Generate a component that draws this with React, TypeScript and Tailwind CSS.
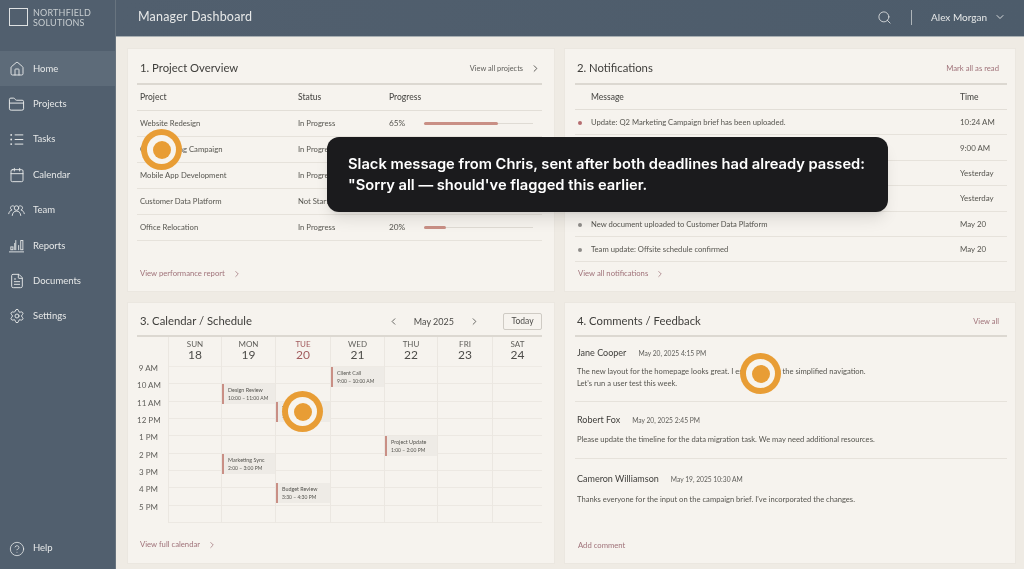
import { Home, FolderClosed, Calendar, FileText, Settings, CircleHelp, Search, ChevronDown, ChevronRight, ChevronLeft } from 'lucide-react';
import type { ReactNode } from 'react';

const TasksIcon = () => (
  <svg width="17" height="17" viewBox="0 0 24 24" fill="none" stroke="currentColor" strokeWidth="1.4" strokeLinecap="round">
    <circle cx="4.500" cy="5.500" r="1.300" fill="currentColor" stroke="none" />
    <circle cx="4.500" cy="12" r="1.300" fill="currentColor" stroke="none" />
    <circle cx="4.500" cy="18.500" r="1.300" fill="currentColor" stroke="none" />
    <path d="M10 5.500h11M10 12h11M10 18.500h11" />
  </svg>
);

const TeamIcon = () => (
  <svg width="17" height="17" viewBox="0 0 24 24" fill="none" stroke="currentColor" strokeWidth="1.3" strokeLinecap="round" strokeLinejoin="round">
    <circle cx="12" cy="8.500" r="3.200" />
    <path d="M6 19c.4-4 2.800-6.200 6-6.200s5.600 2.200 6 6.200" />
    <path d="M8.700 6.200A3 3 0 1 0 5.800 11.200C3.200 11.800 1.600 13.800 1 16.500" />
    <path d="M15.300 6.200A3 3 0 1 1 18.200 11.200C20.800 11.800 22.400 13.800 23 16.500" />
  </svg>
);

const ReportsIcon = () => (
  <svg width="17" height="17" viewBox="0 0 24 24" fill="none" stroke="currentColor" strokeWidth="1.300" strokeLinecap="round">
    <path d="M2 21h20" />
    <rect x="4" y="14" width="3" height="4" />
    <path d="M11 5v13" />
    <path d="M9.500 9v9M15 12v6" />
    <rect x="18" y="5" width="3" height="13" />
  </svg>
);

const NAV: { label: string; icon: ReactNode; active?: boolean }[] = [
  { label: 'Home', icon: <Home size={16} strokeWidth={1.4} />, active: true },
  { label: 'Projects', icon: <FolderClosed size={17} strokeWidth={1.4} /> },
  { label: 'Tasks', icon: <TasksIcon /> },
  { label: 'Calendar', icon: <Calendar size={16} strokeWidth={1.4} /> },
  { label: 'Team', icon: <TeamIcon /> },
  { label: 'Reports', icon: <ReportsIcon /> },
  { label: 'Documents', icon: <FileText size={16} strokeWidth={1.4} /> },
  { label: 'Settings', icon: <Settings size={16} strokeWidth={1.4} /> },
];

const PROJECTS = [
  { name: 'Website Redesign', status: 'In Progress', pct: '65%', fill: 'w-[68%]' },
  { name: 'Q2 Marketing Campaign', status: 'In Progress', pct: '40%', fill: 'w-[40%]' },
  { name: 'Mobile App Development', status: 'In Progress', pct: '30%', fill: 'w-[30%]' },
  { name: 'Customer Data Platform', status: 'Not Started', pct: '0%', fill: 'w-0' },
  { name: 'Office Relocation', status: 'In Progress', pct: '20%', fill: 'w-[20%]' },
];

const NOTIFICATIONS = [
  { text: 'Update: Q2 Marketing Campaign brief has been uploaded.', time: '10:24 AM', dot: 'bg-[#b56d70]' },
  { text: 'Reminder: Website Redesign review is due today.', time: '9:00 AM', dot: 'bg-[#b56d70]' },
  { text: 'Mobile App Development milestone completed.', time: 'Yesterday', dot: 'bg-[#8f8d89]' },
  { text: 'Budget Review meeting was rescheduled.', time: 'Yesterday', dot: 'bg-[#8f8d89]' },
  { text: 'New document uploaded to Customer Data Platform', time: 'May 20', dot: 'bg-[#8f8d89]' },
  { text: 'Team update: Offsite schedule confirmed', time: 'May 20', dot: 'bg-[#8f8d89]' },
];

const HOURS = ['9 AM', '10 AM', '11 AM', '12 PM', '1 PM', '2 PM', '3 PM', '4 PM', '5 PM'];

const DAYS = [
  { name: 'SUN', num: '18', width: 'w-[53px]', events: [] },
  {
    name: 'MON', num: '19', width: 'w-[54px]',
    events: [
      { title: 'Design Review', time: '10:00 – 11:00 AM', pos: 'top-[17px]' },
      { title: 'Marketing Sync', time: '2:00 – 3:00 PM', pos: 'top-[87px]' },
    ],
  },
  {
    name: 'TUE', num: '20', width: 'w-[55px]', today: true,
    events: [
      { title: 'Team Review', time: '10:00 – 11:00 AM', pos: 'top-[35px]' },
      { title: 'Budget Review', time: '3:30 – 4:30 PM', pos: 'top-[116px]' },
    ],
  },
  { name: 'WED', num: '21', width: 'w-[54px]', events: [{ title: 'Client Call', time: '9:00 – 10:00 AM', pos: 'top-0' }] },
  { name: 'THU', num: '22', width: 'w-[53px]', events: [{ title: 'Project Update', time: '1:00 – 2:00 PM', pos: 'top-[69px]' }] },
  { name: 'FRI', num: '23', width: 'w-[55px]', events: [] },
  { name: 'SAT', num: '24', width: 'w-[50px]', events: [] },
];

const COMMENTS = [
  {
    name: 'Jane Cooper', date: 'May 20, 2025 4:15 PM', box: 'h-[65px] pt-[9px] border-b border-[#e6e2db]', gap: 'mt-[5px]',
    lines: ['The new layout for the homepage looks great. I especially like the simplified navigation.', "Let's run a user test this week."],
  },
  {
    name: 'Robert Fox', date: 'May 20, 2025 2:45 PM', box: 'h-[57px] pt-[11px] border-b border-[#e6e2db]', gap: 'mt-[6px]',
    lines: ['Please update the timeline for the data migration task. We may need additional resources.'],
  },
  {
    name: 'Cameron Williamson', date: 'May 19, 2025 10:30 AM', box: 'h-[60px] pt-[13px]', gap: 'mt-[7px]',
    lines: ["Thanks everyone for the input on the campaign brief. I've incorporated the changes."],
  },
];

function Marker({ pos }: { pos: string }) {
  return (
    <div className={`absolute ${pos} w-[41px] h-[41px] rounded-full bg-[#e89d35] flex items-center justify-center`}>
      <div className="w-[29px] h-[29px] rounded-full bg-[#f7f4ee] flex items-center justify-center">
        <div className="w-[18px] h-[18px] rounded-full bg-[#e89d35]" />
      </div>
    </div>
  );
}

function FooterLink({ label, chevron = true }: { label: string; chevron?: boolean }) {
  return (
    <a className="flex items-center gap-[5px] pl-[3px] text-[7.700px] text-[#a0737a]">
      {label}
      {chevron && <ChevronRight size={10} strokeWidth={1.8} className="ml-[2px]" />}
    </a>
  );
}

export default function App() {
  return (
    <div className="relative flex h-screen w-full overflow-hidden bg-[#efebe4] text-[#56554f] font-['Lato',sans-serif] blur-[0.3px]">
      {/* Sidebar */}
      <aside className="w-[116px] shrink-0 bg-[#515f6e] text-[#e6e8e8] flex flex-col border-r border-[#68747f]">
        <div className="h-[51px] pl-[9px] pt-[8px] flex items-start gap-[5px]">
          <div className="w-[19px] h-[18px] border border-[#dfe2e3]" />
          <div className="text-[9px] leading-[10px] text-[#c8ced1] tracking-[0.2px]">
            NORTHFIELD
            <br />
            SOLUTIONS
          </div>
        </div>
        <nav className="flex flex-col">
          {NAV.map((item) => (
            <div
              key={item.label}
              className={`h-[35.400px] flex items-center gap-[8px] pl-[8px] text-[9.500px] ${item.active ? 'bg-[#5d6b79]' : ''}`}
            >
              <span className="w-[17px] flex justify-center">{item.icon}</span>
              {item.label}
            </div>
          ))}
        </nav>
        <div className="mt-auto h-[41px] flex items-center gap-[8px] pl-[8px] text-[9.500px]">
          <span className="w-[17px] flex justify-center">
            <CircleHelp size={16} strokeWidth={1.2} />
          </span>
          Help
        </div>
      </aside>

      <div className="flex-1 flex flex-col min-w-0">
        {/* Top bar */}
        <header className="h-[37px] shrink-0 pb-[2px] bg-gradient-to-r from-[#515f6e] to-[#4d5c6b] border-b border-[#a9b0b3] flex items-center pl-[22px] pr-[18px] text-[#e6e8e8]">
          <h1 className="text-[12.500px] tracking-[0.2px]">Manager Dashboard</h1>
          <div className="ml-auto flex items-center">
            <Search size={15} strokeWidth={1.3} />
            <div className="w-px h-[15px] bg-[#aeb5b9] mx-[19px]" />
            <span className="text-[10px]">Alex Morgan</span>
            <ChevronDown size={12} strokeWidth={1.8} className="ml-[7px]" />
          </div>
        </header>

        {/* Cards */}
        <main className="flex-1 grid grid-cols-[428px_452px] grid-rows-[244px_262px] gap-x-[9px] gap-y-[10px] pl-[11px] pt-[11px]">
          <section className="bg-[#f6f3ee] border border-[#ebe7e0] pl-[9px] pr-[12px] flex flex-col">
            <div className="h-[36px] shrink-0 pt-[5px] flex items-center justify-between pl-[3px] pr-[1px] border-b-2 border-[#dcd8d1]">
              <h2 className="text-[11.300px] text-[#3f3e3b]">1. Project Overview</h2>
              <span className="flex items-center gap-[7px] text-[7.400px] text-[#5f5e5a]">
                View all projects <ChevronRight size={11} strokeWidth={1.8} className="text-[#3f3e3b]" />
              </span>
            </div>
            <div className="h-[26px] flex items-center pl-[3px] border-b border-[#e2ded7] text-[8.500px] font-medium text-[#4d4c49]">
              <span className="w-[158px]">Project</span>
              <span className="w-[91px]">Status</span>
              <span>Progress</span>
            </div>
            {PROJECTS.map((p) => (
              <div key={p.name} className="h-[26px] flex items-center pl-[3px] border-b border-[#e6e2db] text-[7.700px]">
                <span className="w-[158px]">{p.name}</span>
                <span className="w-[91px]">{p.status}</span>
                <span className="w-[35px] text-[8.300px]">{p.pct}</span>
                <div className="w-[109px] h-px bg-[#dfdbd4] flex items-center">
                  <div className={`h-[3px] rounded-full bg-[#c98f85] ${p.fill}`} />
                </div>
              </div>
            ))}
            <div className="mt-auto h-[23px]">
              <FooterLink label="View performance report" />
            </div>
          </section>

          <section className="bg-[#f6f3ee] border border-[#ebe7e0] pl-[10px] pr-[8px] flex flex-col">
            <div className="h-[36px] shrink-0 pt-[5px] flex items-center justify-between pl-[2px] pr-[8px] border-b-2 border-[#dcd8d1]">
              <h2 className="text-[11.300px] text-[#3f3e3b]">2. Notifications</h2>
              <span className="text-[7.700px] text-[#a0737a]">Mark all as read</span>
            </div>
            <div className="h-[25px] flex items-center border-b border-[#e2ded7] text-[8.500px] font-medium text-[#4d4c49]">
              <span className="w-[385px] pl-[16px]">Message</span>
              <span>Time</span>
            </div>
            {NOTIFICATIONS.map((n) => (
              <div key={n.text} className="h-[25.400px] pt-[2px] flex items-center border-b border-[#e6e2db] last:border-b-0 text-[7.900px]">
                <span className={`w-[4px] h-[4px] rounded-full ml-[3px] mr-[9px] shrink-0 ${n.dot}`} />
                <span className="w-[369px] text-[7.650px]">{n.text}</span>
                <span>{n.time}</span>
              </div>
            ))}
            <div className="mt-auto h-[23px]">
              <FooterLink label="View all notifications" />
            </div>
          </section>

          <section className="bg-[#f6f3ee] border border-[#ebe7e0] pl-[9px] pr-[12px] flex flex-col">
            <div className="h-[34px] shrink-0 pt-[5px] flex items-center pl-[3px] border-b-2 border-[#dcd8d1]">
              <h2 className="text-[11.300px] text-[#3f3e3b]">3. Calendar / Schedule</h2>
              <div className="ml-auto flex items-center text-[#4d4c49]">
                <ChevronLeft size={11} strokeWidth={1.8} />
                <span className="mx-[15px] text-[9px]">May 2025</span>
                <ChevronRight size={11} strokeWidth={1.8} />
                <button className="ml-[23px] w-[39px] h-[17px] border border-[#cfcbc4] rounded-[2px] text-[8.500px]">Today</button>
              </div>
            </div>
            <div className="flex">
              {/* Hour labels */}
              <div className="w-[31px] shrink-0 pt-[29px]">
                {HOURS.map((h) => (
                  <div key={h} className="h-[17.330px] pr-[10px] text-right text-[8px] leading-[8px] text-[#5f5e5a] relative top-[-2px] whitespace-nowrap">
                    {h}
                  </div>
                ))}
              </div>
              {DAYS.map((d) => (
                <div key={d.name} className={`${d.width} shrink-0 border-l border-[#ebe7e1]`}>
                  <div className="h-[29px] flex flex-col items-center pt-[3px]">
                    <span className={`text-[8px] leading-[8px] ${d.today ? 'text-[#a25c5e]' : 'text-[#5f5e5a]'}`}>{d.name}</span>
                    <span className={`text-[12px] leading-[13px] ${d.today ? 'text-[#a25c5e]' : 'text-[#4d4c49]'}`}>{d.num}</span>
                  </div>
                  <div className="relative border-t border-[#eeeae4]">
                    {HOURS.map((h) => (
                      <div key={h} className="h-[17.330px] border-b border-[#ece8e2]" />
                    ))}
                    {d.events.map((e) => (
                      <div key={e.title} className={`absolute left-0 right-0 h-[20px] ${e.pos} bg-[#eeebe6] border-l-2 border-[#c98f85] pl-[4px] pt-[3px]`}>
                        <div className="text-[5.400px] leading-[7px] text-[#55544f] whitespace-nowrap">{e.title}</div>
                        <div className="text-[5px] leading-[7px] mt-px text-[#55544f] whitespace-nowrap">{e.time}</div>
                      </div>
                    ))}
                  </div>
                </div>
              ))}
            </div>
            <div className="mt-auto h-[24px]">
              <FooterLink label="View full calendar" />
            </div>
          </section>

          <section className="bg-[#f6f3ee] border border-[#ebe7e0] pl-[10px] pr-[8px] flex flex-col">
            <div className="h-[34px] shrink-0 pt-[5px] flex items-center justify-between pl-[2px] pr-[8px] border-b-2 border-[#dcd8d1]">
              <h2 className="text-[11.300px] text-[#3f3e3b]">4. Comments / Feedback</h2>
              <span className="text-[7.500px] text-[#a0737a]">View all</span>
            </div>
            {COMMENTS.map((c) => (
              <div key={c.name} className={`${c.box} pl-[2px]`}>
                <div className="flex items-baseline gap-[12px]">
                  <span className="text-[9px] text-[#3f3e3b]">{c.name}</span>
                  <span className="text-[6.700px] text-[#5f5e5a]">{c.date}</span>
                </div>
                <div className={`${c.gap} text-[7.600px] leading-[12px]`}>
                  {c.lines.map((l) => (
                    <div key={l}>{l}</div>
                  ))}
                </div>
              </div>
            ))}
            <div className="mt-auto h-[23px]">
              <FooterLink label="Add comment" chevron={false} />
            </div>
          </section>
        </main>
      </div>

      {/* Overlays */}
      <Marker pos="left-[141px] top-[129px]" />
      <Marker pos="left-[282px] top-[391px]" />
      <Marker pos="left-[740px] top-[353px]" />

      <div className="absolute left-[327px] top-[137px] w-[561px] h-[75px] rounded-[12px] bg-[#1b1b1d] shadow-lg pl-[21px] pt-[17px] text-white text-[14.700px] leading-[21px] font-semibold font-['Inter',sans-serif]">
        Slack message from Chris, sent after both deadlines had already passed:
        <br />
        "Sorry all — should've flagged this earlier.
      </div>
    </div>
  );
}
